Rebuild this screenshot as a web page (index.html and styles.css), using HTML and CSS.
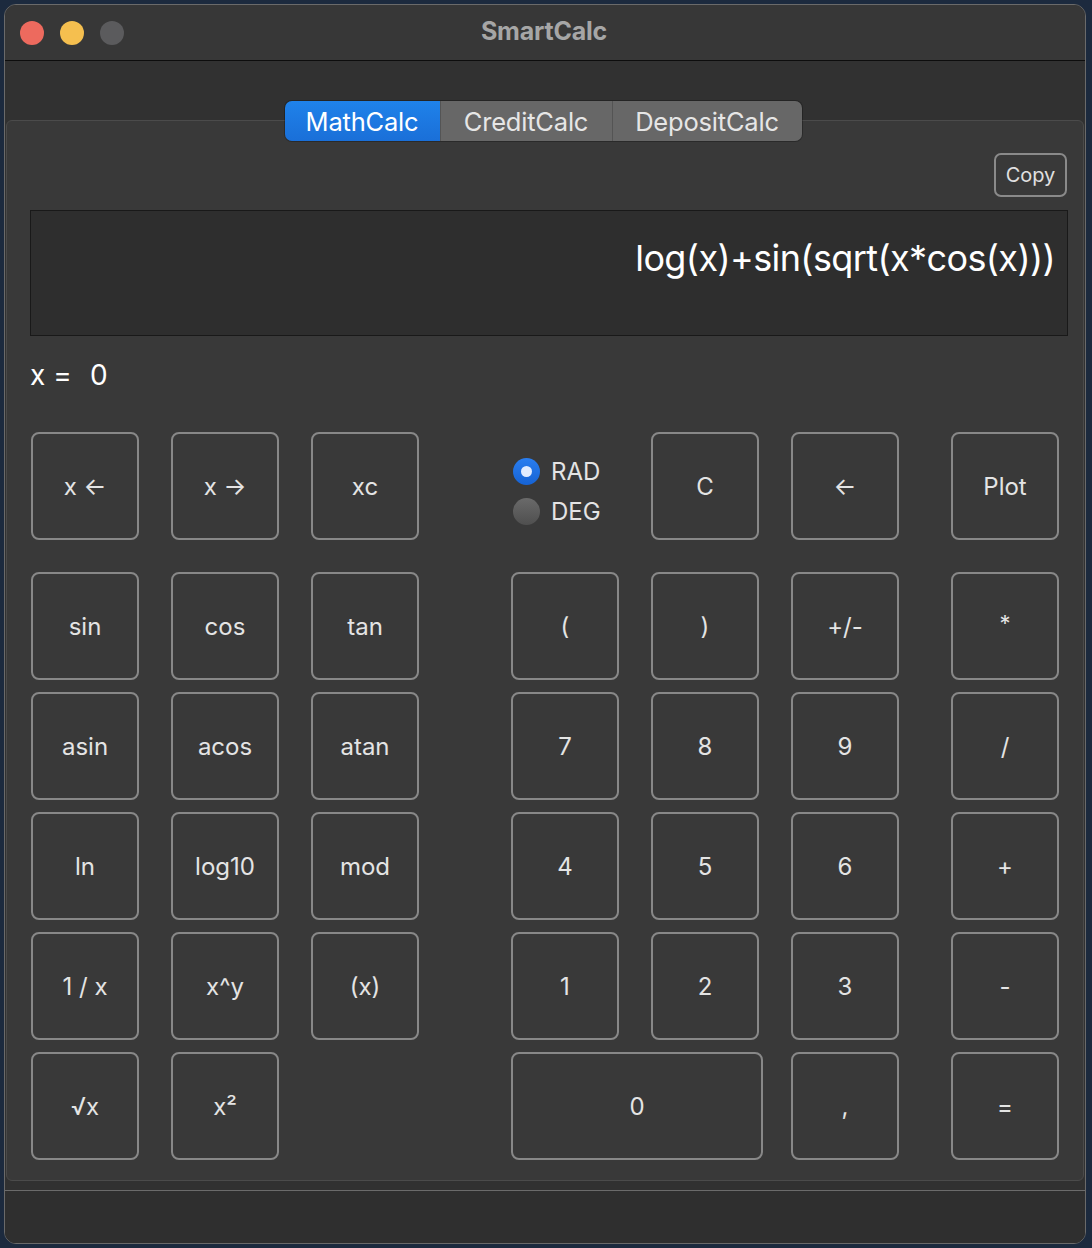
FILE: index.html
```html
<!DOCTYPE html>
<html>
<head>
<meta charset="utf-8">
<title>SmartCalc</title>
<link rel="stylesheet" href="styles.css">
</head>
<body>
<div class="window">
  <div class="titlebar">
    <div class="lights">
      <span class="light red"></span>
      <span class="light yellow"></span>
      <span class="light gray"></span>
    </div>
    <div class="title">SmartCalc</div>
    <div></div>
  </div>
  <div class="main">
    <div class="tabs">
      <div class="tab active">MathCalc</div>
      <div class="tab">CreditCalc</div>
      <div class="tab">DepositCalc</div>
    </div>
    <div class="pane">
      <div class="copy-row"><button class="copy">Copy</button></div>
      <div class="display">log(x)+sin(sqrt(x*cos(x)))</div>
      <div class="xrow"><span class="xlabel">x =</span><span class="xval">0</span></div>
      <div class="keys">
        <button class="key r1 c1">x ←</button>
        <button class="key r1 c2">x →</button>
        <button class="key r1 c3">xc</button>
        <div class="radios r1 c4">
          <label class="radio"><span class="dot on"></span>RAD</label>
          <label class="radio"><span class="dot"></span>DEG</label>
        </div>
        <button class="key r1 c5">C</button>
        <button class="key r1 c6">←</button>
        <button class="key r1 c7">Plot</button>

        <button class="key r2 c1">sin</button>
        <button class="key r2 c2">cos</button>
        <button class="key r2 c3">tan</button>
        <button class="key r2 c4">(</button>
        <button class="key r2 c5">)</button>
        <button class="key r2 c6">+/-</button>
        <button class="key r2 c7 star">*</button>

        <button class="key r3 c1">asin</button>
        <button class="key r3 c2">acos</button>
        <button class="key r3 c3">atan</button>
        <button class="key r3 c4">7</button>
        <button class="key r3 c5">8</button>
        <button class="key r3 c6">9</button>
        <button class="key r3 c7">/</button>

        <button class="key r4 c1">ln</button>
        <button class="key r4 c2">log10</button>
        <button class="key r4 c3">mod</button>
        <button class="key r4 c4">4</button>
        <button class="key r4 c5">5</button>
        <button class="key r4 c6">6</button>
        <button class="key r4 c7">+</button>

        <button class="key r5 c1">1 / x</button>
        <button class="key r5 c2">x^y</button>
        <button class="key r5 c3">(x)</button>
        <button class="key r5 c4">1</button>
        <button class="key r5 c5">2</button>
        <button class="key r5 c6">3</button>
        <button class="key r5 c7">-</button>

        <button class="key r6 c1">√x</button>
        <button class="key r6 c2">x²</button>
        <button class="key r6 c4 zero">0</button>
        <button class="key r6 c6">,</button>
        <button class="key r6 c7">=</button>
      </div>
    </div>
    <div class="status"></div>
  </div>
</div>
</body>
</html>
```

FILE: styles.css
```css
* { box-sizing: border-box; }
html, body { margin: 0; padding: 0; }
body {
  background: #1c2a3e;
  width: 1092px;
  height: 1248px;
  overflow: hidden;
  font-family: Inter, "Noto Sans", "Liberation Sans", sans-serif;
}
.window {
  margin: 4px 0 0 4px;
  width: 1082px;
  height: 1240px;
  border: 1px solid #6a6a6a;
  border-radius: 12px;
  overflow: hidden;
  background: #313131;
  display: flex;
  flex-direction: column;
}
.titlebar {
  height: 56px;
  flex: none;
  background: #373737;
  border-bottom: 1px solid #0d0d0d;
  display: grid;
  grid-template-columns: 1fr auto 1fr;
  align-items: center;
}
.lights {
  display: flex;
  gap: 16px;
  padding-left: 15px;
}
.light {
  width: 24px;
  height: 24px;
  border-radius: 50%;
  display: block;
}
.light.red { background: #ed6a5e; }
.light.yellow { background: #f5bf4f; }
.light.gray { background: #5b5b5d; }
.title {
  color: #a6a6a6;
  font-weight: 700;
  font-size: 25px;
  letter-spacing: -0.2px;
  padding-bottom: 4px;
  padding-right: 2px;
}
.main {
  flex: 1;
  display: flex;
  flex-direction: column;
  background: #313131;
}
.tabs {
  margin: 40px auto -21px;
  position: relative;
  left: -2px;
  z-index: 1;
  display: flex;
  height: 40px;
  border-radius: 7px;
  overflow: hidden;
  box-shadow: 0 0 0 1px rgba(0,0,0,0.25);
}
.tab {
  height: 40px;
  display: flex;
  align-items: center;
  justify-content: center;
  background: #676767;
  color: #e6e6e6;
  font-size: 25.5px;
  letter-spacing: -0.2px;
  border-left: 1px solid #545454;
}
.tab:nth-child(1) { width: 155px; border-left: none; }
.tab:nth-child(2) { width: 172px; }
.tab:nth-child(3) { width: 190px; }
.tab.active {
  background: linear-gradient(#1f82ea, #1a6fd8);
  color: #ffffff;
}
.pane {
  margin: 0 1px;
  height: 1061px;
  flex: none;
  background: #393939;
  border: 1px solid #4b4b4b;
  border-radius: 6px;
  padding: 32px 15px 0 23px;
}
.copy-row {
  display: flex;
  justify-content: flex-end;
  padding-right: 1px;
}
.copy {
  width: 73px;
  height: 44px;
  background: transparent;
  border: 2px solid #8a8a8a;
  border-radius: 7px;
  color: #e0e0e0;
  font-family: inherit;
  font-size: 20px;
  padding: 0;
}
.display {
  margin-top: 13px;
  height: 126px;
  background: #2e2e2e;
  border: 1px solid #191919;
  color: #ffffff;
  font-size: 36px;
  letter-spacing: -0.6px;
  text-align: right;
  padding: 25px 12px 0 0;
  line-height: 44px;
}
.xrow {
  margin-top: 22px;
  height: 34px;
  display: flex;
  align-items: center;
  color: #ffffff;
  font-size: 28px;
}
.xlabel { width: 60px; }
.keys {
  margin-top: 40px;
  margin-left: 1px;
  display: grid;
  grid-template-columns: 140px 140px 200px 140px 140px 160px 108px;
  grid-template-rows: 140px 120px 120px 120px 120px 108px;
}
.key {
  width: 108px;
  height: 108px;
  background: #393939;
  border: 2px solid #888888;
  border-radius: 8px;
  color: #e4e4e4;
  font-family: inherit;
  font-size: 24px;
  padding: 0;
  display: flex;
  align-items: center;
  justify-content: center;
}
.key.zero { width: 252px; grid-column: 4 / span 2; }
.key.star { padding-bottom: 6px; font-size: 22px; }
.r1 { grid-row: 1; }
.r2 { grid-row: 2; }
.r3 { grid-row: 3; }
.r4 { grid-row: 4; }
.r5 { grid-row: 5; }
.r6 { grid-row: 6; }
.c1 { grid-column: 1; }
.c2 { grid-column: 2; }
.c3 { grid-column: 3; }
.c4 { grid-column: 4; }
.c5 { grid-column: 5; }
.c6 { grid-column: 6; }
.c7 { grid-column: 7; }
.radios {
  height: 108px;
  display: flex;
  flex-direction: column;
  justify-content: center;
  gap: 14px;
  padding-left: 2px;
  padding-top: 10px;
}
.radio {
  display: flex;
  align-items: center;
  gap: 11px;
  color: #e4e4e4;
  font-size: 24px;
  height: 26px;
}
.dot {
  width: 27px;
  height: 27px;
  border-radius: 50%;
  background: linear-gradient(#6a6a6a, #4f4f4f);
  display: flex;
  align-items: center;
  justify-content: center;
}
.dot.on {
  background: linear-gradient(#2a7ef0, #1663d4);
}
.dot.on::after {
  content: "";
  width: 11px;
  height: 11px;
  border-radius: 50%;
  background: #e2ecff;
}
.status {
  margin-top: 9px;
  flex: 1;
  border-top: 1px solid #6b6b6b;
  background: #2f2f2f;
}
```
